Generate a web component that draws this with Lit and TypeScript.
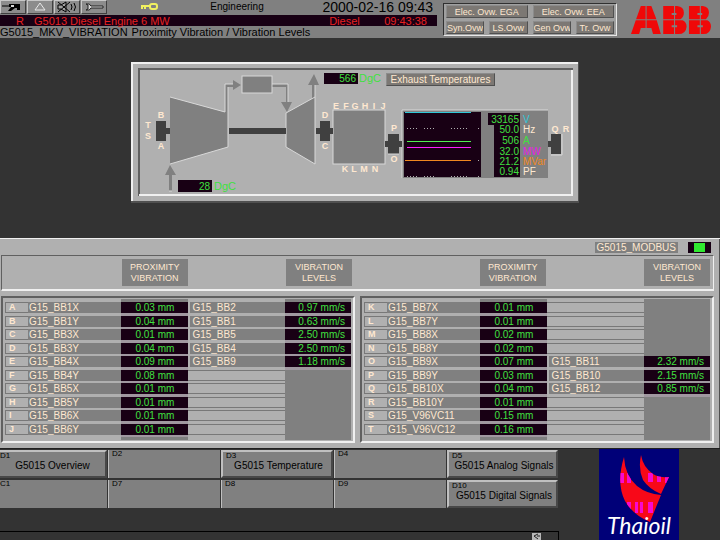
import { LitElement, html, css, svg, nothing } from "lit";
import { customElement, property } from "lit/decorators.js";
import { classMap } from "lit/directives/class-map.js";

interface Row {
  key: string;
  tag: string;
  prox: string;
  tag2?: string;
  level?: string;
}

const LEFT_ROWS: Row[] = [
  { key: "A", tag: "G15_BB1X", prox: "0.03 mm", tag2: "G15_BB2", level: "0.97 mm/s" },
  { key: "B", tag: "G15_BB1Y", prox: "0.04 mm", tag2: "G15_BB1", level: "0.63 mm/s" },
  { key: "C", tag: "G15_BB3X", prox: "0.01 mm", tag2: "G15_BB5", level: "2.50 mm/s" },
  { key: "D", tag: "G15_BB3Y", prox: "0.04 mm", tag2: "G15_BB4", level: "2.50 mm/s" },
  { key: "E", tag: "G15_BB4X", prox: "0.09 mm", tag2: "G15_BB9", level: "1.18 mm/s" },
  { key: "F", tag: "G15_BB4Y", prox: "0.08 mm" },
  { key: "G", tag: "G15_BB5X", prox: "0.01 mm" },
  { key: "H", tag: "G15_BB5Y", prox: "0.01 mm" },
  { key: "I", tag: "G15_BB6X", prox: "0.01 mm" },
  { key: "J", tag: "G15_BB6Y", prox: "0.01 mm" },
];

const RIGHT_ROWS: Row[] = [
  { key: "K", tag: "G15_BB7X", prox: "0.01 mm" },
  { key: "L", tag: "G15_BB7Y", prox: "0.01 mm" },
  { key: "M", tag: "G15_BB8X", prox: "0.02 mm" },
  { key: "N", tag: "G15_BB8Y", prox: "0.02 mm" },
  { key: "O", tag: "G15_BB9X", prox: "0.07 mm", tag2: "G15_BB11", level: "2.32 mm/s" },
  { key: "P", tag: "G15_BB9Y", prox: "0.03 mm", tag2: "G15_BB10", level: "2.15 mm/s" },
  { key: "Q", tag: "G15_BB10X", prox: "0.04 mm", tag2: "G15_BB12", level: "0.85 mm/s" },
  { key: "R", tag: "G15_BB10Y", prox: "0.01 mm" },
  { key: "S", tag: "G15_V96VC11", prox: "0.15 mm" },
  { key: "T", tag: "G15_V96VC12", prox: "0.16 mm" },
];

/* Title bar: tool buttons, alarm line, display name, overview links, maker's logo. */
@customElement("title-bar")
class TitleBar extends LitElement {
  static styles = css`
    :host {
      display: flex;
      height: 38px;
      background: #808080;
      font: 11px/12px "Liberation Sans", Arial, sans-serif;
      color: #000;
      white-space: nowrap;
    }
    .main { flex: 1; min-width: 0; padding-right: 6px; }
    .top { display: grid; grid-template-columns: 107px 84fr 92fr 154fr; height: 15px; }
    .tools { display: flex; gap: 1px; }
    .tool {
      flex: 1;
      height: 14px;
      padding: 0;
      border: 1px solid;
      border-color: #c8c8c8 #404040 #404040 #c8c8c8;
      background: #8c8c8c;
      display: flex;
      justify-content: center;
    }
    .key { justify-self: center; margin-top: 2px; }
    .user { text-align: center; font-size: 10px; line-height: 13px; }
    .clock { text-align: right; padding-right: 4px; font-size: 14px; line-height: 15px; }
    .alarm {
      display: flex;
      height: 11px;
      line-height: 12px;
      background: #180014;
      color: #e82020;
      padding: 0 10px 0 16px;
    }
    .prio { width: 18px; }
    .source { flex: 1; }
    .kind { width: 55px; }
    .name { padding: 0; margin: 0; font: inherit; display: flex; gap: 4px; }
    .links {
      width: 174px;
      height: 33px;
      box-sizing: border-box;
      margin-top: 3px;
      padding: 1px 2px;
      border: 1px solid;
      border-color: #303030 #e8e8e8 #e8e8e8 #303030;
      background: #a0a0a0;
      display: grid;
      grid-template-columns: repeat(4, 1fr);
      gap: 3px 5px;
    }
    .link {
      min-width: 0;
      padding: 0;
      border: 1px solid;
      border-color: #8c8c8c #505050 #505050 #8c8c8c;
      background: #7c7874;
      color: #ffe8d0;
      font: 9px/10px "Liberation Sans", Arial, sans-serif;
      overflow: hidden;
    }
    .wide { grid-column: span 2; }
    .brand { width: 80px; height: 28px; margin: 6px 9px 0 14px; }
  `;

  render() {
    return html`
      <div class="main">
        <div class="top">
          <div class="tools">
            <button class="tool" aria-label="Acknowledge">
              <svg width="22" height="12" viewBox="0 0 22 12">
                <path d="M0 5h8" stroke="#000" fill="none" />
                <path d="M7 3h11v6h-3V7h-2L9 10H6l3-4H7z" fill="#000" />
                <path d="M9 4h3v2H9z" fill="#d8d8d8" />
              </svg>
            </button>
            <button class="tool" aria-label="Alarm list">
              <svg width="16" height="12" viewBox="0 0 16 12">
                <path d="M8 2L13 9H3z" fill="#909090" stroke="#e8e8e8" />
              </svg>
            </button>
            <button class="tool" aria-label="Silence">
              <svg width="24" height="12" viewBox="0 0 24 12">
                <path d="M3 4h3l5-3v10L6 8H3z" fill="#a0a0a0" stroke="#000" />
                <path d="M3 1l12 10M15 1L3 11M16 3q2 3 0 6M19 2q3 4 0 8" stroke="#000" fill="none" />
              </svg>
            </button>
            <button class="tool" aria-label="Tools">
              <svg width="22" height="12" viewBox="0 0 22 12">
                <path d="M3 3q4-1 5 2h12v2H8q-1 3-5 2l2-1V4z" fill="#d8d8d8" stroke="#202020" />
              </svg>
            </button>
          </div>
          <svg class="key" width="20" height="9" viewBox="0 0 20 9">
            <path d="M2 4h9M3 4v3M6 4v3" stroke="#f0f060" stroke-width="2" fill="none" />
            <rect x="11" y="2" width="7" height="5" rx="2" fill="none" stroke="#f0f060" stroke-width="2" />
          </svg>
          <div class="user">Engineering</div>
          <div class="clock">2000-02-16 09:43</div>
        </div>
        <div class="alarm">
          <span class="prio">R</span>
          <span class="source">G5013 Diesel Engine 6 MW</span>
          <span class="kind">Diesel</span>
          <span>09:43:38</span>
        </div>
        <h1 class="name"><span>G5015_MKV_VIBRATION</span><span>Proximity Vibration / Vibration Levels</span></h1>
      </div>
      <nav class="links">
        <button class="link wide">Elec. Ovw. EGA</button>
        <button class="link wide">Elec. Ovw. EEA</button>
        <button class="link">Syn.Ovw</button>
        <button class="link">LS.Ovw</button>
        <button class="link">Gen Ovw</button>
        <button class="link">Tr. Ovw</button>
      </nav>
      <svg class="brand" viewBox="0 0 236 84" preserveAspectRatio="none" role="img" aria-label="ABB">
        <g fill="#f00808">
          <path d="M29 0H43V40H15z" />
          <path d="M46 0H60L75 40H46z" />
          <path d="M14 43H43V66H29L24 84H0z" />
          <path d="M46 43H76L88 84H65L60 66H46z" />
          <path d="M95 0H127V40H95zM130 0H136Q156 2 156 20Q156 32 146 40H130zM95 43H127V84H95zM130 43H152Q164 48 164 62Q162 84 140 84H130z" />
          <path d="M171 0H203V40H171zM206 0H212Q230 2 230 20Q230 32 221 40H206zM171 43H203V84H171zM206 43H225Q236 48 236 62Q234 84 214 84H206z" />
        </g>
        <g fill="#808080">
          <path d="M120 21h14v6h-14zM120 58h16v6h-16zM196 21h14v6h-14zM196 58h16v6h-16z" />
        </g>
      </svg>
    `;
  }
}

/* Machine train: compressor, turbine, gearbox, generator and its trend plot. */
@customElement("machine-mimic")
class MachineMimic extends LitElement {
  static styles = css`
    :host { display: block; }
    .mimic { display: block; width: 100%; height: auto; font: 10px "Liberation Sans", Arial, sans-serif; }
    .body { fill: #808080; }
    .edge { stroke: #d8d8d8; stroke-width: 1; }
    .dark { fill: #404040; }
    .well { fill: #180014; }
    .mark { fill: #ffe8d0; text-anchor: middle; font-weight: bold; font-size: 9px; }
    .value { fill: #40e040; text-anchor: end; }
    .unit { fill: #40e040; font-size: 11px; }
    .link {
      box-sizing: border-box;
      width: 109px;
      height: 13px;
      display: block;
      padding: 0;
      border: 1px solid;
      border-color: #8c8c8c #505050 #505050 #8c8c8c;
      background: #7c7874;
      color: #ffe8d0;
      font: 10px/11px "Liberation Sans", Arial, sans-serif;
      white-space: nowrap;
    }
  `;

  private marks: [string, number, number][] = [
    ["B", 161, 118], ["T", 148, 128], ["S", 148, 139], ["A", 161, 149],
    ["D", 325, 118], ["C", 325, 149],
    ["E", 336, 109], ["F", 346, 109], ["G", 355, 109], ["H", 365, 109], ["I", 374, 109], ["J", 383, 109],
    ["K", 345, 172], ["L", 354, 172], ["M", 364, 172], ["N", 375, 172],
    ["P", 394, 131], ["O", 394, 162], ["Q", 555, 132], ["R", 566, 132],
  ];

  private readings: [string, string, string, number][] = [
    ["33165", "V", "#30c8d8", 123],
    ["50.0", "Hz", "#ffe8d0", 133],
    ["506", "A", "#40e040", 144],
    ["32.0", "MW", "#e820e8", 155],
    ["21.2", "MVar", "#f08820", 165],
    ["0.94", "PF", "#ffe8d0", 175],
  ];

  render() {
    return html`
      <svg class="mimic" viewBox="131 62 448 141">
        <rect x="131" y="62" width="448" height="141" fill="#505050" />
        <rect x="131" y="62" width="447" height="139" fill="#f0f0f0" />
        <rect x="133" y="64" width="445" height="137" fill="#b0b0b0" />
        <path d="M139 196V69H573" fill="none" stroke="#606060" stroke-width="2" />
        <path d="M139 195H572V70" fill="none" stroke="#f0f0f0" stroke-width="2" />

        <g class="body">
          <path d="M170 97L228 113V147L170 164z" />
          <path d="M225 113V84H233V80L241 85L233 90V87H228V113z" />
          <path d="M272 84H288V102H292L287 112L281 102H286V87H272z" />
          <path d="M286 113L315 97V164L286 147z" />
          <path d="M312 99V85H308L314 74L319 85H315V99z" />
          <path d="M169 191V175H165L170 165L176 175H172V191z" />
          <rect class="edge" x="242" y="76" width="30" height="17" />
          <rect class="edge" x="333" y="110" width="52" height="54" />
          <rect x="402" y="110" width="146" height="68" />
        </g>
        <g class="edge" fill="none">
          <path d="M170 97L225 112M228 113V147L170 164" />
          <path d="M225 112V84H233M228 113V87M272 84H288V102M286 113V147L315 164V97L286 113" />
          <path d="M315 97V85M169 191H172M402 178V110H548" />
        </g>
        <g class="dark">
          <path d="M156 121H166V128H170V134H166V141H156z" />
          <rect x="229" y="128" width="57" height="6" />
          <path d="M316 128H320V121H330V128H333V134H330V141H320V134H316z" />
          <path d="M385 141H388V134H399V141H402V147H399V154H388V147H385z" />
          <path d="M548 141H551V134H561V154H551V147H548z" />
        </g>
        <path class="edge" d="M551 155H562V134M388 154H399" fill="none" />

        <g class="well">
          <rect x="324" y="73" width="34" height="11" />
          <rect x="178" y="180" width="34" height="12" />
          <rect x="404" y="112" width="77" height="65" />
          <path d="M488 113H520V177H494V125H488z" />
        </g>
        <g>
          <rect x="405" y="112" width="66" height="1" fill="#30c8d8" />
          <rect x="407" y="141" width="64" height="1" fill="#50f050" />
          <rect x="407" y="147" width="64" height="1" fill="#ff20ff" />
          <rect x="405" y="160" width="66" height="1" fill="#f08820" />
          <path
            d="M407 128.500h12M424 128.500h12M451 128.500h18M478 128.500h1M407 176.500h12M424 176.500h12M451 176.500h18M478 176.500h1M478 160.500h1"
            stroke="#b0b0b0"
            stroke-dasharray="1 2"
          />
        </g>

        ${this.marks.map(([label, x, y]) => svg`<text class="mark" x=${x} y=${y}>${label}</text>`)}
        ${this.readings.map(
          ([value, unit, color, y]) => svg`
            <text class="value" x="519" y=${y}>${value}</text>
            <text fill=${color} x="523" y=${y}>${unit}</text>`
        )}
        <text class="value" x="356" y="82">566</text>
        <text class="unit" x="359" y="82">DgC</text>
        <text class="value" x="210" y="190">28</text>
        <text class="unit" x="214" y="190">DgC</text>
        <foreignObject x="386" y="73" width="109" height="13">
          <button class="link">Exhaust Temperatures</button>
        </foreignObject>
      </svg>
    `;
  }
}

/* One framed table of ten bearings. */
@customElement("vibration-table")
class VibrationTable extends LitElement {
  @property({ attribute: false }) rows: Row[] = [];

  static styles = css`
    :host {
      display: block;
      flex: 1;
      min-width: 0;
      box-sizing: border-box;
      height: 147px;
      border: 2px solid;
      border-color: #606060 #f0f0f0 #f0f0f0 #606060;
      padding: 1px 2px 0;
    }
    .grid {
      width: 100%;
      table-layout: fixed;
      border-collapse: separate;
      border-spacing: 0;
      font: 10px/10px "Liberation Sans", Arial, sans-serif;
      color: #ffe8d0;
      white-space: nowrap;
      margin: 0;
    }
    .c-key { width: 23px; }
    .c-tag { width: 27%; }
    .c-prox { width: 67px; }
    .c-level { width: 66px; }
    td { padding: 0; height: 14px; vertical-align: top; }
    tr:nth-child(even) td { height: 13px; }
    .box { height: 11px; box-sizing: border-box; overflow: hidden; }
    .key { border: 1px solid #787878; border-right: 0; padding-left: 3px; font-size: 9px; font-weight: bold; line-height: 9px; }
    .tag { background: #808080; padding-left: 1px; line-height: 11px; }
    .tag2 { background: #808080; margin-left: 2px; padding-left: 2px; line-height: 11px; }
    .blank { border: 1px solid #787878; border-width: 1px 0; }
    .prox, .level { background: #180014; color: #40e040; line-height: 11px; }
    .prox { text-align: center; }
    .level { text-align: right; padding-right: 6px; }
    .strip { background: #a098a0; }
    .solid { background: #808080; }
    .cap td { height: 3px; }
  `;

  private cap() {
    return html`<tbody class="cap" aria-hidden="true">
      <tr><td></td><td></td><td class="solid"></td><td></td><td class="solid"></td></tr>
    </tbody>`;
  }

  render() {
    return html`
      <table class="grid" aria-label="Vibration readings">
        <colgroup>
          <col class="c-key" /><col class="c-tag" /><col class="c-prox" /><col /><col class="c-level" />
        </colgroup>
        ${this.cap()}
        <tbody>
          ${this.rows.map(
            (r) => html`<tr>
              <td><div class="box key">${r.key}</div></td>
              <td><div class="box tag">${r.tag}</div></td>
              <td class="strip"><div class="box prox">${r.prox}</div></td>
              <td><div class=${classMap({ box: true, tag2: !!r.tag2, blank: !r.tag2 })}>${r.tag2 ?? nothing}</div></td>
              <td class=${r.level ? "strip" : "solid"}>
                ${r.level ? html`<div class="box level">${r.level}</div>` : nothing}
              </td>
            </tr>`
          )}
        </tbody>
        ${this.cap()}
      </table>
    `;
  }
}

/* Function key row, status line and plant logo. */
@customElement("key-bar")
class KeyBar extends LitElement {
  static styles = css`
    :host {
      display: flex;
      flex: 1;
      min-height: 91px;
      font: 10px/11px "Liberation Sans", Arial, sans-serif;
      color: #000;
    }
    .main { flex: 1; min-width: 0; display: flex; flex-direction: column; }
    .keys {
      display: grid;
      grid-template-columns: 108fr 113fr 113fr 113fr 112fr;
      grid-auto-rows: 28px;
      gap: 2px 0;
      padding-top: 1px;
    }
    .fkey {
      display: flex;
      flex-direction: column;
      margin: 0 1px 0 0;
      padding: 0 0 0 3px;
      border: 0 solid #c0c0c0;
      border-left-width: 1px;
      background: #808080;
      color: #000;
      font: inherit;
      white-space: nowrap;
      text-align: left;
    }
    .edge { border-left-width: 0; padding-left: 0; }
    .active { border: 2px solid; border-color: #c0c0c0 #484848 #484848 #c0c0c0; }
    .edge.active { border-left-width: 0; }
    .code { font-size: 8px; line-height: 8px; }
    .label { align-self: center; }
    .status {
      height: 11px;
      margin-top: auto;
      box-sizing: border-box;
      border: 1px solid #000;
      border-left: 0;
      display: flex;
      justify-content: flex-end;
      padding: 1px 17px 0 0;
    }
    .side { width: 161px; box-sizing: border-box; padding-left: 40px; }
  `;

  private keys = [
    ["D1", "G5015 Overview"],
    ["D2", ""],
    ["D3", "G5015 Temperature"],
    ["D4", ""],
    ["D5", "G5015 Analog Signals"],
    ["C1", ""],
    ["D7", ""],
    ["D8", ""],
    ["D9", ""],
    ["D10", "G5015 Digital Signals"],
  ];

  render() {
    return html`
      <div class="main">
        <div class="keys">
          ${this.keys.map(
            ([code, label], i) => html`<button
              class=${classMap({ fkey: true, active: !!label, edge: i % 5 === 0 })}
            ><span class="code">${code}</span>${label ? html`<span class="label">${label}</span>` : nothing}</button>`
          )}
        </div>
        <div class="status">
          <svg width="9" height="7" viewBox="0 0 9 7">
            <rect width="9" height="7" fill="#b8b8b8" />
            <path d="M6 1L2 3L6 6M5 3H8" stroke="#202020" fill="none" />
          </svg>
        </div>
      </div>
      <div class="side">
        <svg width="80" height="91" viewBox="0 0 80 91" role="img" aria-label="Thaioil">
          <defs>
            <clipPath id="flame">
              <path d="M25 8Q26 27 38 37Q48 45 62 46L51 73Q34 66 26 52Q17 34 25 8z" />
              <path d="M42 6Q44 18 54 25Q61 29 70 28L62 45Q50 40 44 31Q39 20 42 6z" />
            </clipPath>
          </defs>
          <rect width="80" height="91" fill="#000078" />
          <g clip-path="url(#flame)">
            <rect width="80" height="91" fill="#f80818" />
            <path
              d="M21 24h4v10h-4zM28 24h4v10h-4zM49 24h5v9h-5zM58 24h4v9h-4zM66 28h5v6h-5zM28 53h4v11h-4zM36 53h3v11h-3zM41 53h3v11h-3zM49 53h5v11h-5z"
              fill="#f808d0"
            />
          </g>
          <text
            x="40"
            y="85"
            fill="#fff"
            text-anchor="middle"
            font-family="Lato, sans-serif"
            font-style="italic"
            font-size="23"
          >Thaioil</text>
        </svg>
      </div>
    `;
  }
}

@customElement("app-root")
class AppRoot extends LitElement {
  static styles = css`
    :host {
      display: flex;
      flex-direction: column;
      min-height: 100vh;
      background: #333;
      font-family: "Liberation Sans", Arial, sans-serif;
      overflow: hidden;
    }
    .mimic { margin: 24px 141px 35px 131px; }
    .panel {
      background: #b0b0b0;
      border-top: 1px solid #f0f0f0;
      border-bottom: 1px solid #202020;
      padding: 0 6px 5px 1px;
      box-shadow: inset -1px 0 #505050;
    }
    .source {
      display: flex;
      justify-content: flex-end;
      gap: 10px;
      padding: 3px 3px 2px 0;
      font-size: 10px;
      line-height: 11px;
      color: #ffe8d0;
    }
    .name { background: #808080; padding: 0 2px; }
    .lamp { width: 11px; height: 9px; border: solid #180014; border-width: 1px 6px; background: #30e830; }
    .heads {
      display: flex;
      gap: 5px;
      border: 1px solid;
      border-color: #606060 #f0f0f0 #f0f0f0 #606060;
      border-bottom-width: 2px;
      margin-bottom: 5px;
    }
    .half {
      flex: 1;
      display: grid;
      grid-template-columns: 23px 27% 67px 1fr 66px;
      padding: 3px 3px 3px;
    }
    .head {
      grid-column: 3;
      background: #808080;
      color: #ffe8d0;
      font-size: 9px;
      line-height: 11px;
      height: 22px;
      padding: 3px 0 2px;
      margin-right: 1px;
      text-align: center;
    }
    .last { grid-column: 5; margin-right: 0; }
    .tables { display: flex; gap: 5px; }
  `;

  private half() {
    return html`<div class="half">
      <div class="head">PROXIMITY<br />VIBRATION</div>
      <div class="head last">VIBRATION<br />LEVELS</div>
    </div>`;
  }

  render() {
    return html`
      <title-bar></title-bar>
      <machine-mimic class="mimic"></machine-mimic>
      <section class="panel">
        <div class="source">
          <span class="name">G5015_MODBUS</span>
          <span class="lamp"></span>
        </div>
        <div class="heads">${this.half()}${this.half()}</div>
        <div class="tables">
          <vibration-table .rows=${LEFT_ROWS}></vibration-table>
          <vibration-table .rows=${RIGHT_ROWS}></vibration-table>
        </div>
      </section>
      <key-bar></key-bar>
    `;
  }
}
